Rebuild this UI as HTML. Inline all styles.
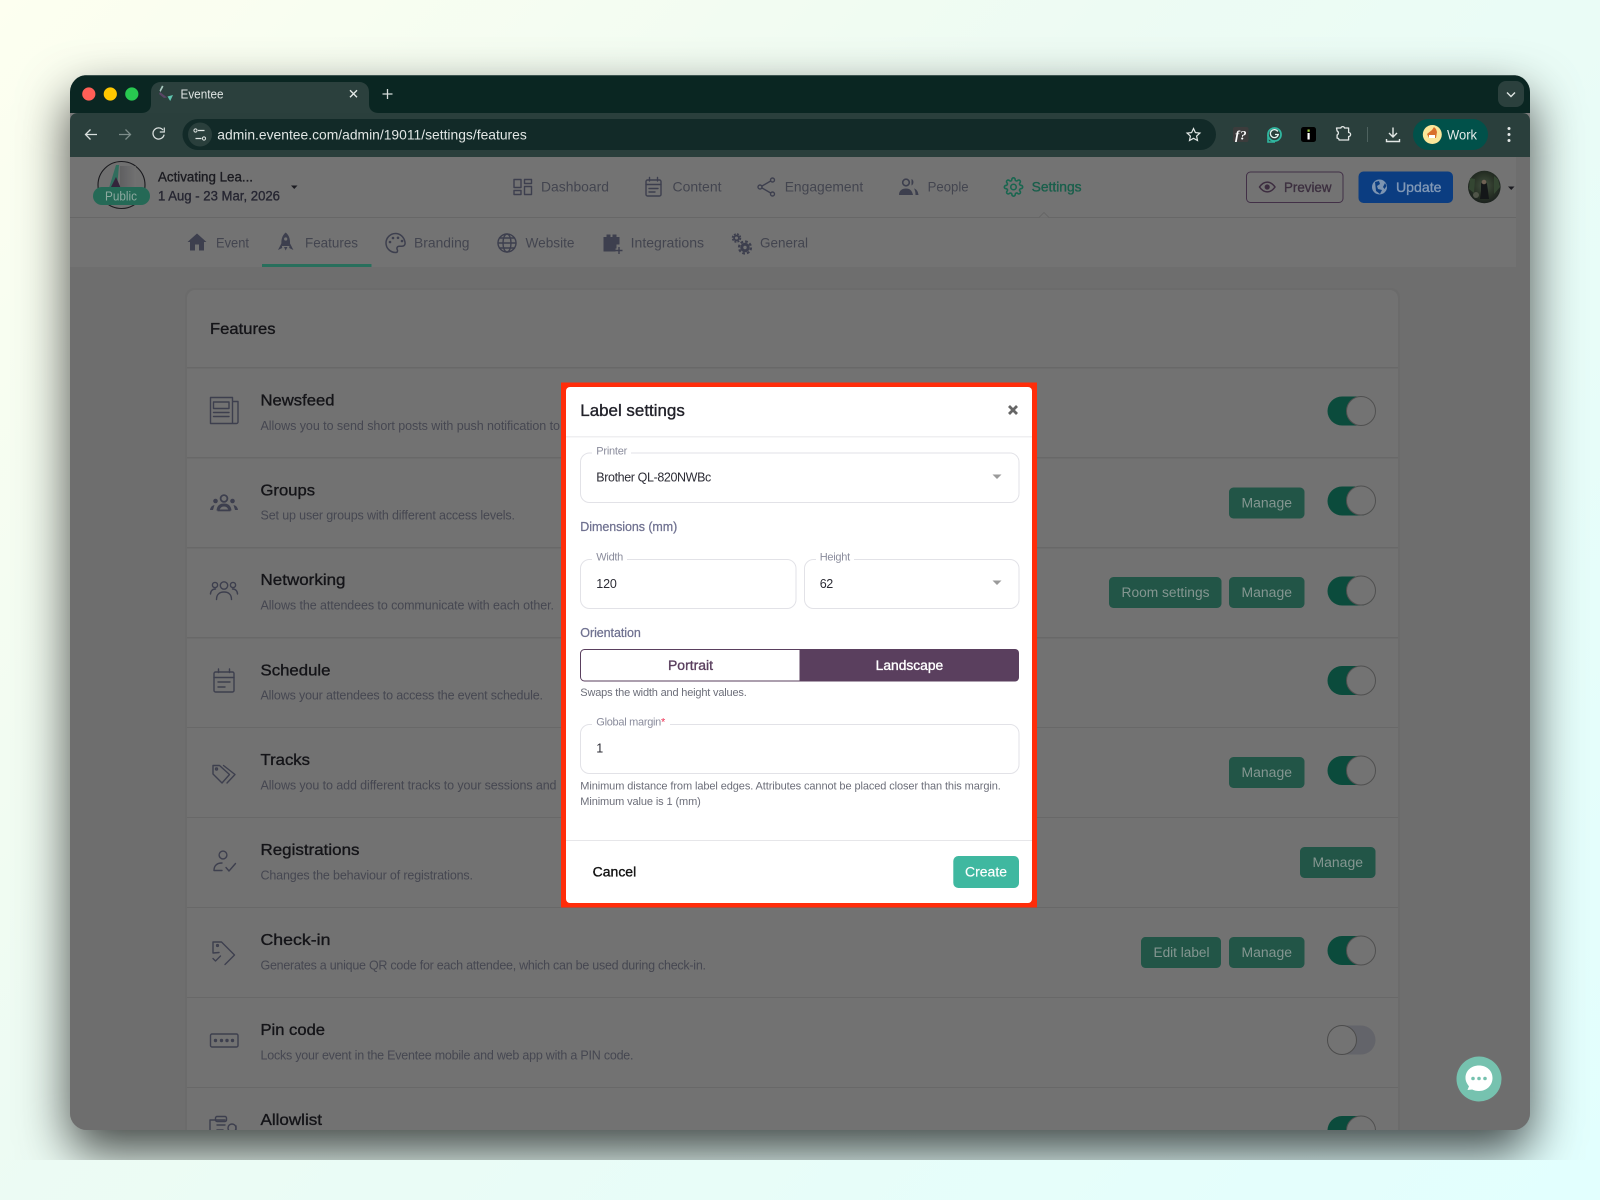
<!DOCTYPE html>
<html lang="en"><head><meta charset="utf-8"><title>Eventee</title>
<style>
html,body{margin:0;padding:0;width:1600px;height:1200px;overflow:hidden;background:linear-gradient(135deg,#fdfff0 0%,#edfbf3 40%,#e2fffe 100%)}
#clip{position:absolute;left:0;top:0;width:1600px;height:1160px;overflow:hidden}
#win{position:absolute;left:70px;top:75px;width:1460px;height:1055px;border-radius:17px;overflow:hidden;background:#7b7b7b;box-shadow:0 22px 50px rgba(0,0,0,.72)}
#win svg{position:absolute;left:-70px;top:-75px}
text{font-family:"Liberation Sans",sans-serif;white-space:pre}
.p{stroke:currentColor;stroke-width:.35}
.nav{font-size:14px;fill:#4b4d59;color:#4b4d59}
.ti{font-size:16px;fill:#17171b;color:#17171b}
.de{font-size:12.5px;fill:#4e505b}
.bt{font-size:13.5px;fill:#93a7a1;color:#93a7a1}
.ic{fill:none;stroke:#454757;stroke-width:1.4;stroke-linecap:round;stroke-linejoin:round}
.fl{fill:#454757}
.lb{font-size:11px;fill:#8a8c9c}
.va{font-size:12.5px;fill:#2c2c35}
.se{font-size:12.5px;fill:#6f7190;color:#6f7190}
.he{font-size:11px;fill:#6c6e79}
.fd{fill:#fff;stroke:#e2e2e7;stroke-width:1}
</style></head><body>
<div id="clip"><div id="win">
<svg width="1600" height="1200" viewBox="0 0 1600 1200" xmlns="http://www.w3.org/2000/svg">
<defs>
<radialGradient id="ph" cx="50%" cy="45%" r="55%"><stop offset="0" stop-color="#4a5a48"/><stop offset=".6" stop-color="#2f3a2c"/><stop offset="1" stop-color="#1f2622"/></radialGradient>
<linearGradient id="lg" x1="0" x2="1"><stop offset="0" stop-color="#5b5b5f"/><stop offset="1" stop-color="#808080"/></linearGradient>
</defs>

<!-- tab strip -->
<rect x="70" y="75" width="1460" height="38" fill="#0a2622"/>
<rect x="70" y="75" width="1460" height="1" fill="#3d5450"/>
<circle cx="88.800" cy="94" r="6.600" fill="#ff5f57"/><circle cx="110.300" cy="94" r="6.600" fill="#ffc800"/><circle cx="131.800" cy="94" r="6.600" fill="#28c850"/>
<path d="M141 113c6 0 10-3 10-9V92c0-6 4-10 10-10h198c6 0 10 4 10 10v12c0 6 4 9 10 9z" fill="#2b403d"/>
<path d="M162 85.500l-2.500 5 1 1.500 3-5.500z" fill="#a9c9c0"/><path d="M160 92l7 5.500-3 .5-5-4z" fill="#5a4666"/><path d="M167.500 96.500l5.500-1.500-2.800 6z" fill="#5fc4ae"/>
<text x="180.500" y="98.500" font-size="12.500" fill="#dfe5e3" textLength="43" lengthAdjust="spacingAndGlyphs">Eventee</text>
<path d="M350 90.300l7 7M357 90.300l-7 7" stroke="#e3e8e6" stroke-width="1.400"/>
<path d="M387.500 89v10M382.500 94h10" stroke="#d5dcda" stroke-width="1.300"/>
<rect x="1498" y="81" width="26" height="26" rx="8" fill="#2b403d"/><path d="M1507 92.500l4 4 4-4" fill="none" stroke="#dfe5e3" stroke-width="1.400"/>

<!-- toolbar -->
<path d="M70 157V121c0-5 3-8 8-8H1522c5 0 8 3 8 8v36z" fill="#2a3f3c"/>
<path d="M97 134.500H85.500M90.500 129.500l-5 5 5 5" fill="none" stroke="#d8dfdd" stroke-width="1.300"/>
<path d="M119 134.500h11.500M125.500 129.500l5 5-5 5" fill="none" stroke="#7d8d8a" stroke-width="1.300"/>
<path d="M163 130a5.600 5.600 0 1 0 1.100 4.600" fill="none" stroke="#d8dfdd" stroke-width="1.300"/><path d="M164.300 127.500v4.500h-4.500" fill="none" stroke="#d8dfdd" stroke-width="1.200"/>
<rect x="182.500" y="119" width="1033.500" height="31" rx="15.500" fill="#122a28"/>
<circle cx="200" cy="134.500" r="12" fill="#2a3f3c"/>
<path d="M198 130.500h6.500M195.500 138.500h6" stroke="#dfe5e3" stroke-width="1.200"/><circle cx="195.500" cy="130.500" r="1.600" fill="none" stroke="#dfe5e3" stroke-width="1"/><circle cx="204" cy="138.500" r="1.600" fill="none" stroke="#dfe5e3" stroke-width="1"/>
<text x="217.300" y="139.500" font-size="14" fill="#e1e6e4" textLength="309.500" lengthAdjust="spacingAndGlyphs">admin.eventee.com/admin/19011/settings/features</text>
<path d="M1193.500 128.500l1.900 4.100 4.500.5-3.300 3 .9 4.400-4-2.200-4 2.200.9-4.400-3.300-3 4.500-.5z" fill="none" stroke="#e3e8e6" stroke-width="1.200"/>
<rect x="1233" y="127" width="15.500" height="15" rx="2" fill="#3c3c3c"/>
<text x="1235" y="139.500" font-size="13" style="font-family:'Liberation Serif',serif;font-weight:700;font-style:italic" fill="#fff" textLength="11.500">f?</text>
<circle cx="1274.500" cy="134.500" r="6.500" fill="none" stroke="#30b7a0" stroke-width="1.800"/>
<path d="M1268 135v7h7" fill="none" stroke="#30b7a0" stroke-width="1.600"/>
<path d="M1277.800 131.500a4 4 0 1 0 .5 3h-3.300" fill="none" stroke="#e6f5f1" stroke-width="1.300"/>
<rect x="1301" y="127" width="15" height="15" rx="2.500" fill="#000"/><rect x="1307.500" y="133" width="2.200" height="6.500" fill="#fff"/><rect x="1307.500" y="129.500" width="2.200" height="2.300" fill="#9acb3c"/>
<path d="M1336.500 128h4.300a2 2 0 0 1 3.800 0h4v4.500a2 2 0 0 1 0 4v3.500h-9.500a2 2 0 0 0-2-1.900v-3.100a2.200 2.200 0 0 0 0-4z" fill="none" stroke="#e3e8e6" stroke-width="1.300" stroke-linejoin="round"/>
<rect x="1367" y="127" width="1" height="15" fill="#4e625f"/>
<path d="M1393 127.500v9.500M1389 133l4 4 4-4M1386.500 139v2.500h13V139" fill="none" stroke="#e3e8e6" stroke-width="1.400"/>
<rect x="1413" y="119" width="75" height="31" rx="15.500" fill="#01514a"/>
<circle cx="1432.300" cy="134.500" r="9.500" fill="#fbe79a"/><path d="M1427 134l5-4 2-3 2 2 1 3-1 6h-7z" fill="#d9702c"/><path d="M1429 138h6v-3h-6z" fill="#fff"/>
<text x="1447" y="139.500" font-size="13.500" fill="#e3ebe9" textLength="30" lengthAdjust="spacingAndGlyphs">Work</text>
<circle cx="1509" cy="128.500" r="1.500" fill="#e3e8e6"/><circle cx="1509" cy="134.500" r="1.500" fill="#e3e8e6"/><circle cx="1509" cy="140.500" r="1.500" fill="#e3e8e6"/>

<!-- page background -->
<rect x="70" y="157" width="1460" height="980" fill="#7b7b7b"/>
<rect x="70" y="157" width="1446" height="60" fill="#818181"/>
<rect x="70" y="217" width="1446" height="50" fill="#808080"/>
<rect x="70" y="217" width="1446" height="1" fill="#737373"/>
<path d="M1039 217.500l5-5 5 5" fill="#818181" stroke="#737373"/>

<!-- header logo -->
<circle cx="121.500" cy="185" r="23.500" fill="#7d7d7d" stroke="#1e1e22" stroke-width="1.100"/>
<path d="M109 188l7-23 3 0-2 23z" fill="#2f7a66" opacity=".9"/>
<path d="M108 193l8-16 7 16z" fill="#3a2a42"/>
<rect x="120" y="166" width="16" height="26" fill="url(#lg)" opacity=".55"/>
<rect x="93" y="187" width="57" height="18" rx="9" fill="#2a7560"/>
<text x="105" y="200.500" font-size="12.500" fill="#9dbcb2" textLength="32" lengthAdjust="spacingAndGlyphs">Public</text>
<text class="p" x="158" y="181.500" font-size="13.500" fill="#1f1f25" color="#1f1f25" textLength="95" lengthAdjust="spacingAndGlyphs">Activating Lea...</text>
<text class="p" x="158" y="200.500" font-size="13.500" fill="#2b2b38" color="#2b2b38" textLength="122" lengthAdjust="spacingAndGlyphs">1 Aug - 23 Mar, 2026</text>
<path d="M291 185.500h6.500l-3.250 3.500z" fill="#1f1f25"/>

<!-- main nav -->
<g class="ic"><rect x="514" y="179.500" width="7" height="8"/><rect x="524.500" y="179.500" width="7" height="4"/><rect x="514" y="190.500" width="7" height="4"/><rect x="524.500" y="186.500" width="7" height="8"/></g>
<text class="nav" x="541" y="191.500" textLength="68" lengthAdjust="spacingAndGlyphs">Dashboard</text>
<g class="ic"><rect x="646" y="180" width="15" height="16" rx="1.500"/><path d="M646 184.500h15M649.500 177.500v3.500M657.500 177.500v3.500M649 188.500h9M649 192h6"/></g>
<text class="nav" x="672.500" y="191.500" textLength="49" lengthAdjust="spacingAndGlyphs">Content</text>
<g class="ic"><circle cx="760" cy="187" r="2"/><circle cx="772.500" cy="180" r="2"/><circle cx="772.500" cy="194" r="2"/><path d="M762 186l8.700-5M762 188l8.700 5"/></g>
<text class="nav" x="784.700" y="191.500" textLength="78.500" lengthAdjust="spacingAndGlyphs">Engagement</text>
<g><circle cx="906" cy="182.500" r="3.300" fill="none" stroke="#454757" stroke-width="1.600"/><path d="M911.500 179c2.600 .8 2.600 5.500 0 6.500zM899 195c0-4.500 3-6.500 7-6.500s6 2 7 6.500z" class="fl"/><path d="M914 188.500c2.500 .5 4 3 4.500 6.500h-3c0-3-.5-5-1.500-6.500z" class="fl"/></g>
<text class="nav" x="927.600" y="191.500" textLength="41" lengthAdjust="spacingAndGlyphs">People</text>
<g transform="translate(1003.500,177) scale(.833)" fill="none" stroke="#1c7259" stroke-width="1.900"><circle cx="12" cy="12" r="3.300"/><path d="M19.400 15a1.650 1.650 0 0 0 .33 1.820l.06.06a2 2 0 0 1 0 2.830 2 2 0 0 1-2.830 0l-.06-.06a1.650 1.650 0 0 0-1.820-.33 1.650 1.650 0 0 0-1 1.510V21a2 2 0 0 1-2 2 2 2 0 0 1-2-2v-.09A1.650 1.650 0 0 0 9 19.400a1.650 1.650 0 0 0-1.820.33l-.06.06a2 2 0 0 1-2.830 0 2 2 0 0 1 0-2.830l.06-.06a1.650 1.650 0 0 0 .33-1.820 1.650 1.650 0 0 0-1.510-1H3a2 2 0 0 1-2-2 2 2 0 0 1 2-2h.09A1.650 1.650 0 0 0 4.600 9a1.650 1.650 0 0 0-.33-1.820l-.06-.06a2 2 0 0 1 0-2.830 2 2 0 0 1 2.830 0l.06.06a1.650 1.650 0 0 0 1.820.33H9a1.650 1.650 0 0 0 1-1.510V3a2 2 0 0 1 2-2 2 2 0 0 1 2 2v.09a1.650 1.650 0 0 0 1 1.510 1.650 1.650 0 0 0 1.820-.33l.06-.06a2 2 0 0 1 2.830 0 2 2 0 0 1 0 2.830l-.06.06a1.650 1.650 0 0 0-.33 1.820V9a1.650 1.650 0 0 0 1.510 1H21a2 2 0 0 1 2 2 2 2 0 0 1-2 2h-.09a1.650 1.650 0 0 0-1.510 1z"/></g>
<text class="nav p" x="1031.600" y="191.500" style="fill:#1c6a54;color:#1c6a54" textLength="50" lengthAdjust="spacingAndGlyphs">Settings</text>

<!-- preview / update -->
<rect x="1246.500" y="172" width="96.500" height="30.500" rx="4" fill="#808080" stroke="#4a3650" stroke-width="1"/>
<path d="M1259.500 187c4.500-6.500 11-6.500 15.500 0-4.500 6.500-11 6.500-15.500 0z" fill="none" stroke="#443348" stroke-width="1.500"/><circle cx="1267.200" cy="187" r="2.600" fill="#443348"/>
<text class="p" x="1284" y="192" font-size="14" fill="#433547" color="#433547" textLength="47.500" lengthAdjust="spacingAndGlyphs">Preview</text>
<rect x="1358.500" y="171.500" width="94.500" height="31.500" rx="5" fill="#0d4590"/>
<circle cx="1379.500" cy="187" r="7.500" fill="#8ba5c6"/><path d="M1375 182l4-1 1 3-3 2 1 3 4 1-2 4-4-3zM1385 183l1.500 3-2 3-1.500-2z" fill="#0d4590"/>
<text class="p" x="1396" y="192" font-size="14" fill="#90aacb" color="#90aacb" textLength="45.500" lengthAdjust="spacingAndGlyphs">Update</text>
<circle cx="1484.300" cy="187" r="16.300" fill="url(#ph)"/><path d="M1481 184c1-3 5-3 6 0l1 7 1 8h-9l1-8z" fill="#171a1c"/><circle cx="1484" cy="182" r="2.300" fill="#7c6c5e"/><path d="M1470 178l5 1-1 14-5-4zM1494 176l4 3 2 8-6 7z" fill="#3a4f38"/><circle cx="1476" cy="195" r="3" fill="#5a5f52"/>
<path d="M1508 186.500h6.500l-3.250 3.500z" fill="#1f1f25"/>

<!-- sub nav -->
<path d="M197 233.500l-9.500 8.500h2.500v8.500h5v-6h4v6h5V242h2.500z" class="fl"/>
<text class="nav" x="216" y="247.500" textLength="33" lengthAdjust="spacingAndGlyphs">Event</text>
<path d="M285.700 232.500c-3.800 3-5 8-4 13.500h8c1-5.500-.2-10.500-4-13.500z" class="fl"/><circle cx="285.700" cy="239" r="1.600" fill="#808080"/><path d="M281.600 243l-3.600 7 4.200-2zM289.800 243l3.600 7-4.200-2zM284 247h3.400l-1.700 3.500z" class="fl"/>
<text class="nav" x="305" y="247.500" textLength="53" lengthAdjust="spacingAndGlyphs">Features</text>
<rect x="262" y="264" width="109.500" height="3" fill="#2d7c67"/>
<path d="M395.500 233.500a9.500 9.500 0 1 0 0 19c2 0 2.500-1.500 1.800-2.800-1-1.700 0-3.400 2-3.400h2.500c2.600 0 3.700-1.800 3.200-4.200-1-5.200-5-8.600-9.500-8.600z" fill="none" stroke="#454757" stroke-width="1.500"/>
<circle cx="390" cy="242" r="1.300" class="fl"/><circle cx="393" cy="238" r="1.300" class="fl"/><circle cx="398" cy="237.800" r="1.300" class="fl"/><circle cx="402" cy="241" r="1.300" class="fl"/>
<text class="nav" x="414" y="247.500" textLength="55.500" lengthAdjust="spacingAndGlyphs">Branding</text>
<g class="ic" stroke-width="1.600"><circle cx="507" cy="243" r="9"/><ellipse cx="507" cy="243" rx="4" ry="9"/><path d="M498 243h18M499.500 238h15M499.500 248h15"/></g>
<text class="nav" x="525.500" y="247.500" textLength="49" lengthAdjust="spacingAndGlyphs">Website</text>
<path d="M603.500 237h3v-2.500h4v2.500h2v-2.500h4v2.500h3v7.500h-3v4h-1v3h-12z" class="fl"/><path d="M619 247v7M615.500 250.500h7" stroke="#454757" stroke-width="1.400"/>
<text class="nav" x="630.600" y="247.500" textLength="73.500" lengthAdjust="spacingAndGlyphs">Integrations</text>
<g fill="none" stroke="#454757"><circle cx="736.500" cy="238" r="2.400" stroke-width="1.800"/><circle cx="736.500" cy="238" r="4" stroke-width="1.500" stroke-dasharray="2 1.200"/><circle cx="745" cy="247.500" r="3.200" stroke-width="3"/><circle cx="745" cy="247.500" r="6" stroke-width="2.200" stroke-dasharray="2.700 2"/></g>
<text class="nav" x="760" y="247.500" textLength="48" lengthAdjust="spacingAndGlyphs">General</text>

<!-- card -->
<rect x="185" y="288" width="1215" height="860" rx="9" fill="#767676" opacity=".4"/>
<rect x="187" y="290" width="1211" height="850" rx="8" fill="#7f7f7f"/>
<text class="ti p" x="210" y="334" textLength="65.500" lengthAdjust="spacingAndGlyphs">Features</text>
<g fill="#747474"><rect x="187" y="367" width="1211" height="1.500"/><rect x="187" y="457" width="1211" height="1.500"/><rect x="187" y="547" width="1211" height="1.500"/><rect x="187" y="637" width="1211" height="1.500"/><rect x="187" y="727" width="1211" height="1"/><rect x="187" y="817" width="1211" height="1"/><rect x="187" y="907" width="1211" height="1"/><rect x="187" y="997" width="1211" height="1"/><rect x="187" y="1087" width="1211" height="1"/></g>

<!-- rows -->
<text class="ti p" x="260.500" y="405.500" textLength="74" lengthAdjust="spacingAndGlyphs">Newsfeed</text>
<text class="de" x="260.500" y="430" textLength="299.500">Allows you to send short posts with push notification to</text>
<text class="ti p" x="260.500" y="495.500" textLength="54.500" lengthAdjust="spacingAndGlyphs">Groups</text>
<text class="de" x="260.500" y="519.500" textLength="254.500">Set up user groups with different access levels.</text>
<text class="ti p" x="260.500" y="585" textLength="85" lengthAdjust="spacingAndGlyphs">Networking</text>
<text class="de" x="260.500" y="609.500" textLength="293.500">Allows the attendees to communicate with each other.</text>
<text class="ti p" x="260.500" y="675.500" textLength="70" lengthAdjust="spacingAndGlyphs">Schedule</text>
<text class="de" x="260.500" y="699.500" textLength="282.500">Allows your attendees to access the event schedule.</text>
<text class="ti p" x="260.500" y="765" textLength="49.500" lengthAdjust="spacingAndGlyphs">Tracks</text>
<text class="de" x="260.500" y="789.500" textLength="296">Allows you to add different tracks to your sessions and</text>
<text class="ti p" x="260.500" y="855" textLength="99" lengthAdjust="spacingAndGlyphs">Registrations</text>
<text class="de" x="260.500" y="879.500" textLength="212.500">Changes the behaviour of registrations.</text>
<text class="ti p" x="260.500" y="945" textLength="70" lengthAdjust="spacingAndGlyphs">Check-in</text>
<text class="de" x="260.500" y="969.500" textLength="445.500">Generates a unique QR code for each attendee, which can be used during check-in.</text>
<text class="ti p" x="260.500" y="1035" textLength="64.500" lengthAdjust="spacingAndGlyphs">Pin code</text>
<text class="de" x="260.500" y="1059.500" textLength="373">Locks your event in the Eventee mobile and web app with a PIN code.</text>
<text class="ti p" x="260.500" y="1125" textLength="61.500" lengthAdjust="spacingAndGlyphs">Allowlist</text>

<!-- row icons -->
<g class="ic" stroke-width="1.100"><path d="M232.500 401.500v22H210.500V397.500h22v4h5.500v20.500a1.500 1.500 0 0 1-1.500 1.500h-4"/><rect x="213.500" y="402" width="15.500" height="6.500"/><path d="M213.500 412.500h15.500M213.500 416.500h15.500"/></g>
<g class="fl"><circle cx="224" cy="498.500" r="3.400" fill="none" stroke="#454757" stroke-width="1.800"/><circle cx="215.500" cy="501" r="2.300"/><circle cx="232.500" cy="501" r="2.300"/><path d="M216.500 510.500c.5-5 3.500-7 7.500-7s7 2 7.500 7h-3c-.5-2.500-2-4-4.500-4s-4 1.500-4.500 4z"/><rect x="217.500" y="509.500" width="13" height="1.800"/><path d="M210 510c.5-3 2-4.500 4.500-5l-1.500 5zM238 510c-.5-3-2-4.500-4.500-5l1.500 5z"/></g>
<g class="ic" stroke-width="1"><circle cx="224" cy="585.500" r="3.700"/><circle cx="215" cy="585" r="2.600"/><circle cx="233" cy="585" r="2.600"/><path d="M216.500 599.500c0-5 3-7.500 7.500-7.500s7.500 2.500 7.500 7.500M210.500 594c0-3 2-5 5-5M237.500 594c0-3-2-5-5-5"/></g>
<g class="ic" stroke-width="1.700"><rect x="214" y="672" width="20" height="20" rx="1.500"/><path d="M214 677.500h20M218.500 669v3.500M229.500 669v3.500M218 682h12M218 687h7"/></g>
<g class="ic" stroke-width="1.600"><path d="M213 765.500h6.500l10 9-7.500 8.500-9-9z"/><circle cx="216.500" cy="769" r="1"/><path d="M223.500 765.500l11.500 9-8 8.500"/></g>
<g class="ic" stroke-width="1.500"><circle cx="223" cy="855" r="3.900"/><path d="M214 870.500c0-5 3-7.500 8-7.500M214 870.500h8M226 867.500l3 3.500 6.500-7.500"/></g>
<g class="ic" stroke-width="1.600"><path d="M219 952.500l-6 .5v-11h8.500l13 13-9.500 9.500"/><circle cx="217.500" cy="945.500" r=".9"/><path d="M213 958.500l2.500 2.500 5-5"/></g>
<g class="ic" stroke-width="1.300"><rect x="210.500" y="1034" width="27.500" height="13" rx="1.500"/></g><g class="fl"><circle cx="215.500" cy="1040.500" r="1.700"/><circle cx="221.500" cy="1040.500" r="1.700"/><circle cx="227" cy="1040.500" r="1.700"/><circle cx="232.500" cy="1040.500" r="1.700"/></g>
<g class="ic" stroke-width="1.300"><path d="M225 1120h-15v18h26v-12M217 1125h8M217 1130h6"/><rect x="215.500" y="1116.500" width="11" height="5" rx="1.500"/><circle cx="232" cy="1128" r="4"/></g>

<!-- manage buttons -->
<g fill="#265f50">
<rect x="1229" y="487.500" width="75.500" height="31" rx="4.500"/>
<rect x="1109" y="577" width="112.500" height="31" rx="4.500"/><rect x="1229" y="577" width="75.500" height="31" rx="4.500"/>
<rect x="1229" y="757" width="75.500" height="31" rx="4.500"/>
<rect x="1300" y="847" width="75.500" height="31" rx="4.500"/>
<rect x="1141" y="937" width="80" height="31" rx="4.500"/><rect x="1229" y="937" width="75.500" height="31" rx="4.500"/>
</g>
<text class="bt" x="1241.500" y="507.500" textLength="50.500" lengthAdjust="spacingAndGlyphs">Manage</text>
<text class="bt" x="1121.500" y="597" textLength="88" lengthAdjust="spacingAndGlyphs">Room settings</text>
<text class="bt" x="1241.500" y="597" textLength="50.500" lengthAdjust="spacingAndGlyphs">Manage</text>
<text class="bt" x="1241.500" y="777" textLength="50.500" lengthAdjust="spacingAndGlyphs">Manage</text>
<text class="bt" x="1312.500" y="867" textLength="50.500" lengthAdjust="spacingAndGlyphs">Manage</text>
<text class="bt" x="1153.500" y="957" textLength="56" lengthAdjust="spacingAndGlyphs">Edit label</text>
<text class="bt" x="1241.500" y="957" textLength="50.500" lengthAdjust="spacingAndGlyphs">Manage</text>

<!-- toggles -->
<g>
<rect x="1327.500" y="396.500" width="48" height="29" rx="14.500" fill="#0d5443"/><circle cx="1361" cy="411" r="14.500" fill="#808080" stroke="#5a5a5a"/>
<rect x="1327.500" y="486.500" width="48" height="29" rx="14.500" fill="#0d5443"/><circle cx="1361" cy="500.500" r="14.500" fill="#808080" stroke="#5a5a5a"/>
<rect x="1327.500" y="576.500" width="48" height="29" rx="14.500" fill="#0d5443"/><circle cx="1361" cy="590.500" r="14.500" fill="#808080" stroke="#5a5a5a"/>
<rect x="1327.500" y="666" width="48" height="29" rx="14.500" fill="#0d5443"/><circle cx="1361" cy="680.500" r="14.500" fill="#808080" stroke="#5a5a5a"/>
<rect x="1327.500" y="756" width="48" height="29" rx="14.500" fill="#0d5443"/><circle cx="1361" cy="770.500" r="14.500" fill="#808080" stroke="#5a5a5a"/>
<rect x="1327.500" y="936" width="48" height="29" rx="14.500" fill="#0d5443"/><circle cx="1361" cy="950.500" r="14.500" fill="#808080" stroke="#5a5a5a"/>
<rect x="1327.500" y="1025.500" width="48" height="29" rx="14.500" fill="#6f7076"/><circle cx="1342" cy="1040" r="14.500" fill="#808080" stroke="#555"/>
<rect x="1327.500" y="1116" width="48" height="29" rx="14.500" fill="#0d5443"/><circle cx="1361" cy="1130.500" r="14.500" fill="#808080" stroke="#5a5a5a"/>
</g>

<!-- dim correction over page -->
<rect x="70" y="157" width="1460" height="980" fill="#000" opacity=".1"/>

<!-- chat -->
<circle cx="1479" cy="1079" r="24" fill="#6f6f6f" opacity=".5"/>
<circle cx="1479" cy="1079" r="22.500" fill="#76c2af"/>
<path d="M1479 1065.500c7.500 0 13.500 5 13.500 12.500s-6 13-13.500 13c-2.600 0-5-.5-6.800-1.500l-4.700 .5 1.500-3.800c-2-2.300-3.500-5-3.500-8.200 0-7.500 6-12.500 13.500-12.500z" fill="#fff"/>
<circle cx="1473" cy="1078.500" r="1.800" fill="#76c2af"/><circle cx="1479" cy="1078.500" r="1.800" fill="#76c2af"/><circle cx="1485" cy="1078.500" r="1.800" fill="#76c2af"/>

<!-- modal -->
<rect x="561" y="382.500" width="476" height="525" fill="#ff2d0a"/>
<rect x="566" y="387" width="466" height="516" rx="4" fill="#fff"/>
<text class="p" x="580.300" y="416" font-size="16.500" fill="#22222a" color="#22222a" textLength="104.500" lengthAdjust="spacingAndGlyphs">Label settings</text>
<path d="M1009 406l8 8M1017 406l-8 8" stroke="#666" stroke-width="2.800"/>
<rect x="566" y="436" width="466" height="1.500" fill="#efeff1"/>

<rect class="fd" x="580.500" y="453" width="438.500" height="49.500" rx="9"/>
<rect x="592" y="450" width="39" height="5" fill="#fff"/>
<text class="lb" x="596.300" y="454.500" textLength="31">Printer</text>
<text class="va" x="596.300" y="481.500" textLength="115">Brother QL-820NWBc</text>
<path d="M992.500 474.500h9l-4.500 4.500z" fill="#9a9a9a"/>

<text class="se p" x="580.300" y="531" style="stroke-width:.25" textLength="97">Dimensions (mm)</text>

<rect class="fd" x="580.500" y="559.500" width="215.500" height="49" rx="9"/>
<rect x="592" y="556" width="35" height="6" fill="#fff"/>
<text class="lb" x="596.300" y="560.500" textLength="27">Width</text>
<text class="va" x="596.300" y="588" textLength="20.500">120</text>
<rect class="fd" x="804.500" y="559.500" width="214.500" height="49" rx="9"/>
<rect x="816" y="556" width="38" height="6" fill="#fff"/>
<text class="lb" x="819.700" y="560.500" textLength="30.500">Height</text>
<text class="va" x="819.700" y="588" textLength="13.500">62</text>
<path d="M992.500 580.500h9l-4.500 4.500z" fill="#9a9a9a"/>

<text class="se p" x="580.300" y="637" style="stroke-width:.25" textLength="60.500">Orientation</text>

<path d="M584.500 649.500H800V681H584.500a4 4 0 0 1-4-4V653.500a4 4 0 0 1 4-4z" fill="#fff" stroke="#5a3f5e" stroke-width="1"/>
<path d="M800 649h215a4 4 0 0 1 4 4v24.500a4 4 0 0 1-4 4H800z" fill="#5a3f5e"/>
<text class="p" x="668" y="670" font-size="13.500" fill="#5a3f5e" color="#5a3f5e" textLength="45" lengthAdjust="spacingAndGlyphs">Portrait</text>
<text class="p" x="875.700" y="670" font-size="13.500" fill="#fff" color="#fff" textLength="67.500" lengthAdjust="spacingAndGlyphs">Landscape</text>
<text class="he" x="580.300" y="696" textLength="166.500">Swaps the width and height values.</text>

<rect class="fd" x="580.500" y="724.500" width="438.500" height="49" rx="9"/>
<rect x="592" y="721" width="78" height="6" fill="#fff"/>
<text class="lb" x="596.300" y="725.500" textLength="65">Global margin</text><text x="661" y="725.500" font-size="11" fill="#ef3355">*</text>
<text class="va" x="596.300" y="752.500">1</text>
<text class="he" x="580.300" y="789.500" textLength="420.500">Minimum distance from label edges. Attributes cannot be placed closer than this margin.</text>
<text class="he" x="580.300" y="805" textLength="120.500">Minimum value is 1 (mm)</text>

<rect x="566" y="840" width="466" height="1" fill="#e6e6e9"/>
<text class="p" x="592.700" y="876.500" font-size="13.500" fill="#111" color="#111" textLength="43.500" lengthAdjust="spacingAndGlyphs">Cancel</text>
<rect x="953.300" y="856" width="65.700" height="32" rx="5" fill="#3fb8a0"/>
<text class="p" x="965" y="876.500" font-size="13.500" fill="#fff" color="#fff" textLength="42" lengthAdjust="spacingAndGlyphs" style="stroke-width:.15">Create</text>
</svg>
</div></div>
</body></html>
